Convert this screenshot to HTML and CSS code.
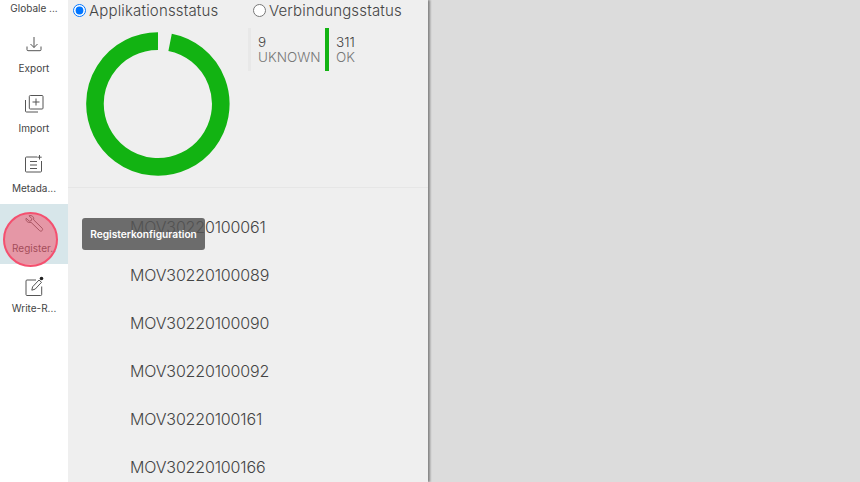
FILE: index.html
```html
<!DOCTYPE html>
<html lang="en">
<head>
  <meta charset="UTF-8">
  <meta name="viewport" content="width=device-width, initial-scale=1.0">
  <title>Registerkonfiguration</title>
  <link rel="stylesheet" href="styles.css">
</head>
<body>

<div class="app">
  <nav class="sidebar">
    <div class="nav-first">Globale ...</div>
    <div class="nav-item">
      <svg class="nav-icon" viewBox="0 0 20 20"><path d="M10 2v10.500M6.500 9 10 12.500 13.500 9M3 11.500v3.200q0 1 1 1h12q1 0 1-1v-3.200"/></svg>
      <span>Export</span>
    </div>
    <div class="nav-item">
      <svg class="nav-icon" viewBox="0 0 20 20"><path d="M6.300.5h11.700q1 0 1 1v11.700q0 .8-1 .8H6.300q-1 0-1-.8V1.500q0-1 1-1zM12 3.500v7M8.500 7h7M1.500 5v11q0 1 1 1H14"/></svg>
      <span>Import</span>
    </div>
    <div class="nav-item">
      <svg class="nav-icon" viewBox="0 0 20 20"><path d="M13 2H2.500q-1 0-1 1v13q0 1 1 1h14q1 0 1-1V6M6 6.500h7M6 10h7M6 13.500h7M15.500 0v4.500M13.300 2.200h4.400"/></svg>
      <span>Metada...</span>
    </div>
    <div class="nav-item active">
      <svg class="nav-icon" viewBox="0 0 20 20"><path d="M2.200 3.200 5.300 6.200l2-.6.600-1.900L5 .8C7.600-.3 10.400 2 9.600 4.800l8.600 8.400c1.400 1.600-.9 4-2.500 2.500L7 7.300C4 8.200 1.300 5.900 2.200 3.200z"/></svg>
      <span>Register..</span>
      <div class="click-mark"></div>
    </div>
    <div class="nav-item">
      <svg class="nav-icon" viewBox="0 0 20 20"><path d="M12 5H3q-1 0-1 1v13.500q0 1 1 1h13.700q1 0 1-1V11.500M7.800 15.200l.8-3.400L15 5l2.500 2.300-6.300 6.800z"/><circle class="pen-tip" cx="17.500" cy="3.500" r="1.800"/></svg>
      <span>Write-R...</span>
    </div>
  </nav>

  <main class="panel">
    <div class="status-top">
      <div class="status-col">
        <label class="radio-row"><input type="radio" name="status" checked>Applikationsstatus</label>
        <svg class="donut" viewBox="0 0 144 144">
          <path d="M84.100 10.300A62.900 62.900 0 1 1 72 9.100" fill="none" stroke="#12b312" stroke-width="17.600"/>
        </svg>
      </div>
      <div class="status-col">
        <label class="radio-row"><input type="radio" name="status">Verbindungsstatus</label>
        <div class="legend">
          <div class="legend-item unknown"><b>9</b><span>UKNOWN</span></div>
          <div class="legend-item ok"><b>311</b><span>OK</span></div>
        </div>
      </div>
    </div>

    <ul class="device-list">
      <li>MOV30220100061</li>
      <li>MOV30220100089</li>
      <li>MOV30220100090</li>
      <li>MOV30220100092</li>
      <li>MOV30220100161</li>
      <li>MOV30220100166</li>
    </ul>

    <div class="tooltip">Registerkonfiguration</div>
  </main>

  <div class="backdrop"></div>
</div>

</body>
</html>
```

FILE: styles.css
```css
html, body {
  margin: 0;
  height: 100%;
  overflow: hidden;
}
body {
  font-family: Inter, "Open Sans", sans-serif;
  color: #444;
  background-color: #dcdcdc;
}
.app {
  display: flex;
  height: 482px;
}
.sidebar {
  width: 68px;
  flex: none;
  background-color: #fff;
  font-size: 10px;
  text-align: center;
}
.nav-first {
  height: 24px;
  padding-top: 1px;
  box-sizing: border-box;
  line-height: 14px;
}
.nav-item {
  position: relative;
  height: 60px;
  display: flex;
  flex-direction: column;
  align-items: center;
  padding-top: 11px;
  box-sizing: border-box;
}
.nav-item span {
  margin-top: 6px;
  line-height: 14px;
  white-space: nowrap;
}
.nav-icon {
  width: 20px;
  height: 20px;
  overflow: visible;
  fill: none;
  stroke: #555;
  stroke-width: 1;
}
.pen-tip {
  fill: #222;
  stroke: none;
}
.nav-item.active {
  background-color: #d7e6ea;
}
.click-mark {
  position: absolute;
  left: 3px;
  top: 8px;
  width: 55px;
  height: 55px;
  box-sizing: border-box;
  border: 2px solid #f4506f;
  border-radius: 50%;
  background-color: rgba(240, 85, 110, 0.55);
}
.panel {
  position: relative;
  width: 360px;
  flex: none;
  height: 482px;
  overflow: hidden;
  background-color: #efefef;
  box-shadow: 2px 0 2px rgba(0, 0, 0, 0.4);
}
.status-top {
  display: flex;
  height: 188px;
  box-sizing: border-box;
  border-bottom: 1px solid #e6e6e6;
}
.status-col:first-child {
  width: 185px;
  padding-left: 5px;
  box-sizing: border-box;
}
.radio-row {
  display: flex;
  align-items: center;
  height: 20px;
  font-size: 15px;
  font-weight: 300;
  letter-spacing: 0.17px;
  white-space: nowrap;
}
.radio-row input {
  width: 13px;
  height: 13px;
  margin: 0 3px 0 0;
}
.donut {
  display: block;
  width: 144px;
  height: 144px;
  margin: 12px 0 0 13px;
}
.legend {
  display: flex;
  margin-top: 8px;
  margin-left: -5px;
}
.legend-item {
  height: 43px;
  display: flex;
  flex-direction: column;
  font-size: 13.500px;
  font-weight: 300;
  line-height: 15px;
  justify-content: center;
}
.legend-item b {
  font-weight: 300;
}
.legend-item span {
  color: #777;
}
.legend-item.unknown {
  border-left: 3px solid #e8e8e8;
  padding-left: 7px;
  width: 67px;
}
.legend-item.ok {
  border-left: 4px solid #12b312;
  padding-left: 7px;
}
.device-list {
  list-style: none;
  margin: 0;
  padding: 15px 0 0 62px;
  font-size: 16px;
  font-weight: 300;
  letter-spacing: -0.15px;
}
.device-list li {
  height: 48px;
  line-height: 48px;
}
.tooltip {
  position: absolute;
  left: 14px;
  top: 218px;
  width: 123px;
  height: 32px;
  line-height: 32px;
  text-align: center;
  border-radius: 3px;
  font-size: 10.200px;
  font-weight: 600;
  color: #fff;
  background-color: rgba(85, 85, 85, 0.85);
}
.backdrop {
  flex: 1;
}
```
